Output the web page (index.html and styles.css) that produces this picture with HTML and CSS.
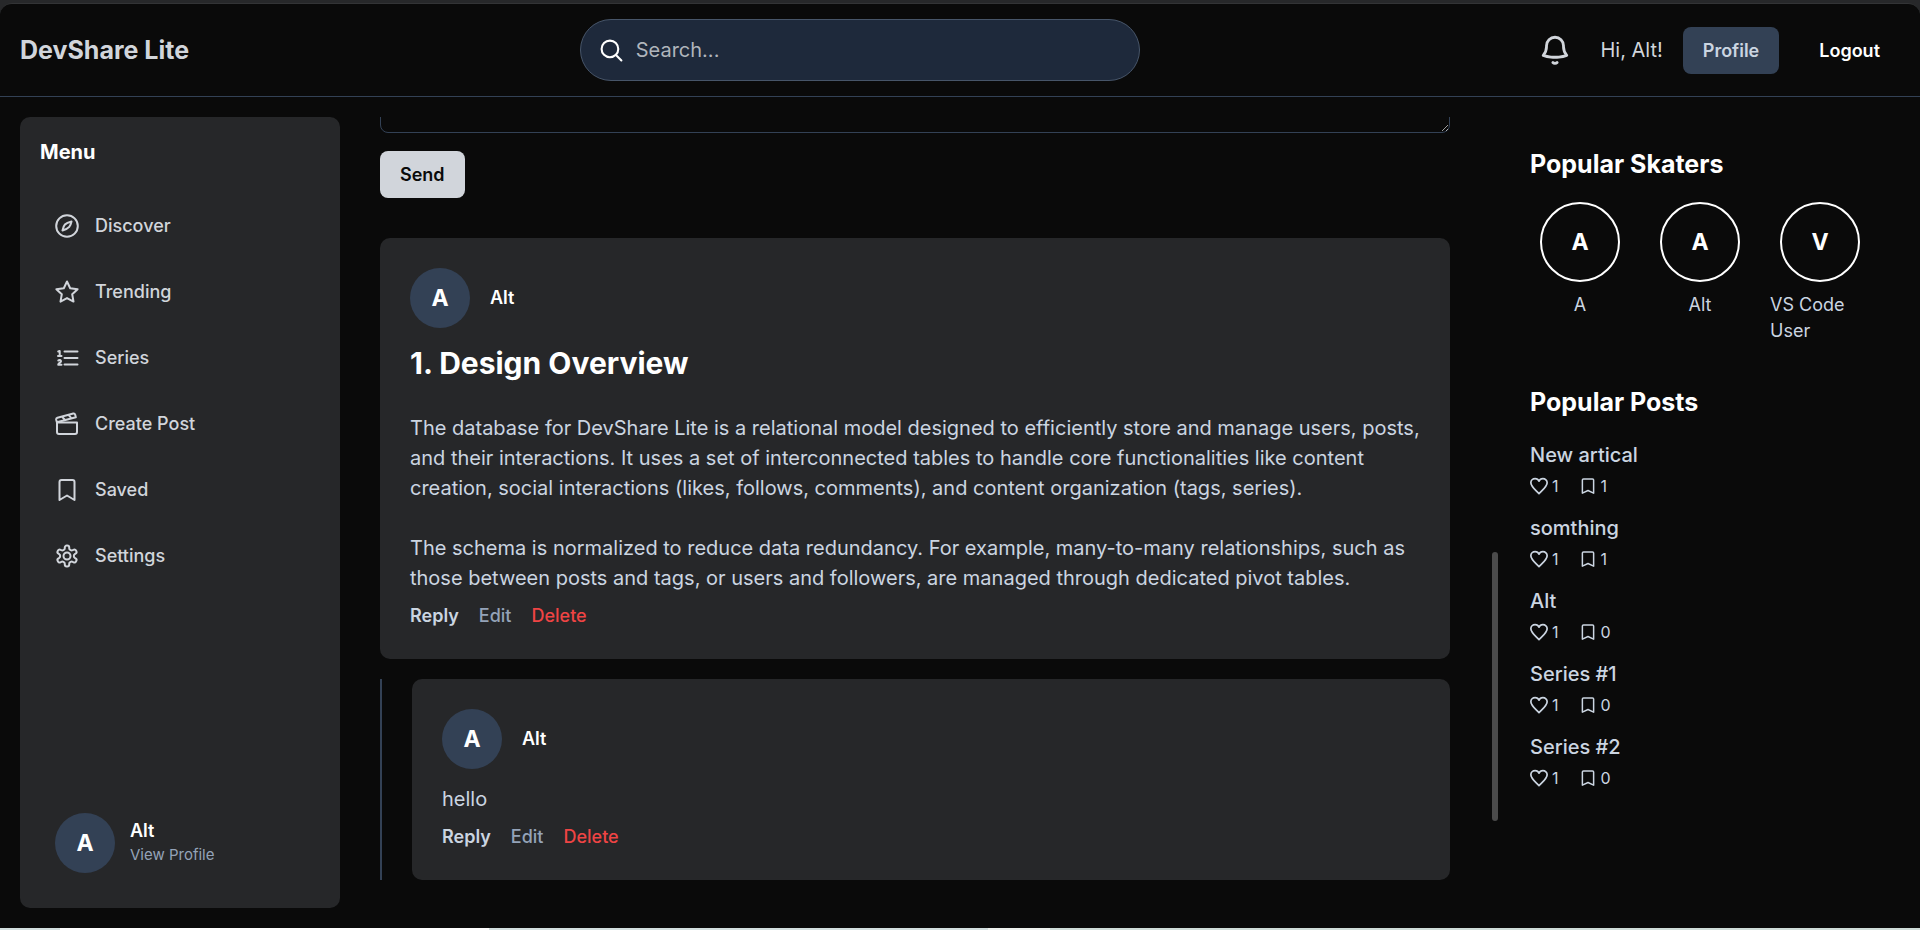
FILE: index.html
```html
<!DOCTYPE html>
<html lang="en">
<head>
<meta charset="utf-8">
<title>DevShare Lite</title>
<link rel="stylesheet" href="styles.css">
</head>
<body>
<svg class="sprite" aria-hidden="true">
  <symbol id="heart" viewBox="1.500 1.500 21 21"><path d="M21.500 8.250c0-2.600-2.200-4.750-5-4.750-2 0-3.800 1.200-4.500 2.900-.7-1.700-2.500-2.900-4.500-2.900-2.800 0-5 2.150-5 4.750 0 4.250 4 7.250 9.500 12.750 5.500-5.500 9.500-8.500 9.500-12.750Z"/></symbol>
  <symbol id="mark" viewBox="0 0 24 24"><path d="M4.500 21.500V4a1.500 1.500 0 0 1 1.500-1.500h12A1.500 1.500 0 0 1 19.500 4v17.500L12 18Z"/></symbol>
</svg>
<div class="app">
  <header class="header">
    <a class="brand" href="#">DevShare Lite</a>
    <label class="search">
      <svg class="icon-search" viewBox="0 0 24 24"><circle cx="10.500" cy="10.500" r="8"/><path d="m16.500 16.500 5 5"/></svg>
      <input class="search-input" type="search" placeholder="Search..." aria-label="Search">
    </label>
    <div class="account">
      <button class="bell" aria-label="Notifications"><svg class="icon-bell" viewBox="0 0 24 24"><path d="M14.857 17.082a23.848 23.848 0 0 0 5.454-1.310A8.967 8.967 0 0 1 18 9.750V9A6 6 0 0 0 6 9v.75a8.967 8.967 0 0 1-2.312 6.022c1.733.64 3.560 1.085 5.455 1.310m5.714 0a24.255 24.255 0 0 1-5.714 0m5.714 0H9.143"/><path d="M10.500 20.800c.8.9 2.200.9 3 0"/></svg></button>
      <span class="greeting">Hi, Alt!</span>
      <button class="btn btn-profile">Profile</button>
      <button class="btn btn-logout">Logout</button>
    </div>
  </header>
  <div class="body">
    <aside class="sidebar">
      <h2 class="menu-title">Menu</h2>
      <nav class="nav">
        <a class="nav-item" href="#"><svg class="icon" viewBox="0 0 24 24"><circle cx="12" cy="12" r="10.800"/><path d="M16.500 7.500C15.500 12 14.500 14.500 7.500 16.500 8.500 11 10 9 16.500 7.500Z"/></svg>Discover</a>
        <a class="nav-item" href="#"><svg class="icon" viewBox="0 0 24 24"><path d="m12 1.500 3.200 6.700 7.400 1-5.400 5.100 1.300 7.300L12 18.100l-6.500 3.500 1.300-7.300L1.400 9.200l7.400-1Z"/></svg>Trending</a>
        <a class="nav-item" href="#"><svg class="icon" viewBox="0 0 24 24"><path d="M9.500 5.500h13M9.500 12h13M9.500 18.500h13"/><path d="M3.200 5.500 4.700 5v5M3 10h3.500M3.300 14.500c1-1 2.900-.5 2.700.9-.1 1-2.800 1.600-2.800 3.300h3.300"/></svg>Series</a>
        <a class="nav-item" href="#"><svg class="icon" viewBox="0 0 24 24"><path d="M20.800 5.300 1.900 10.200l-.7-2.500c-.2-1 .3-1.700 1.200-2l15.900-4.200c1-.2 1.600.3 1.900 1.200ZM7 4.600l3 3.400M13.500 2.900l3 3.400"/><path d="M2 10.500h20V20a2 2 0 0 1-2 2H4a2 2 0 0 1-2-2Z"/></svg>Create Post</a>
        <a class="nav-item" href="#"><svg class="icon" viewBox="0 0 24 24"><path d="M4.500 22V4a2 2 0 0 1 2-2h11a2 2 0 0 1 2 2v18L12 17.500Z"/></svg>Saved</a>
        <a class="nav-item" href="#"><svg class="icon" viewBox="0 0 24 24"><path d="M12.220 1.500h-.44a2 2 0 0 0-2 2v.68a2 2 0 0 1-1 1.730l-.43.25a2 2 0 0 1-2 0l-.65-.33a2 2 0 0 0-2.730.73l-.22.380a2 2 0 0 0 .73 2.730l.65.350a2 2 0 0 1 1 1.720v.51a2 2 0 0 1-1 1.740l-.65.340a2 2 0 0 0-.73 2.730l.22.380a2 2 0 0 0 2.730.73l.65-.33a2 2 0 0 1 2 0l.43.250a2 2 0 0 1 1 1.730v.68a2 2 0 0 0 2 2h.44a2 2 0 0 0 2-2v-.68a2 2 0 0 1 1-1.730l.43-.25a2 2 0 0 1 2 0l.65.330a2 2 0 0 0 2.730-.73l.22-.39a2 2 0 0 0-.73-2.730l-.65-.33a2 2 0 0 1-1-1.740v-.5a2 2 0 0 1 1-1.740l.65-.34a2 2 0 0 0 .73-2.730l-.22-.38a2 2 0 0 0-2.730-.73l-.65.330a2 2 0 0 1-2 0l-.43-.25a2 2 0 0 1-1-1.730V3.500a2 2 0 0 0-2-2Z"/><circle cx="12" cy="12" r="3.500"/></svg>Settings</a>
      </nav>
      <a class="me" href="#">
        <span class="avatar">A</span>
        <span class="me-text"><span class="name">Alt</span><span class="me-link">View Profile</span></span>
      </a>
    </aside>
    <main class="main">
      <form class="composer">
        <textarea class="composer-input" aria-label="Write a comment"></textarea>
        <button class="btn btn-send" type="button">Send</button>
      </form>
      <article class="card">
        <div class="author"><span class="avatar">A</span><span class="name">Alt</span></div>
        <h1 class="card-title">1. Design Overview</h1>
        <p class="text">The database for DevShare Lite is a relational model designed to efficiently store and manage users, posts, and their interactions. It uses a set of interconnected tables to handle core functionalities like content creation, social interactions (likes, follows, comments), and content organization (tags, series).</p>
        <p class="text">The schema is normalized to reduce data redundancy. For example, many-to-many relationships, such as those between posts and tags, or users and followers, are managed through dedicated pivot tables.</p>
        <div class="actions"><button class="action reply">Reply</button><button class="action edit">Edit</button><button class="action delete">Delete</button></div>
      </article>
      <div class="thread">
        <article class="card">
          <div class="author"><span class="avatar">A</span><span class="name">Alt</span></div>
          <p class="text">hello</p>
          <div class="actions"><button class="action reply">Reply</button><button class="action edit">Edit</button><button class="action delete">Delete</button></div>
        </article>
      </div>
      <div class="scroll-thumb"></div>
    </main>
    <aside class="aside">
      <section>
        <h2 class="aside-title">Popular Skaters</h2>
        <div class="people">
          <a class="person" href="#"><span class="ring">A</span><span>A</span></a>
          <a class="person" href="#"><span class="ring">A</span><span>Alt</span></a>
          <a class="person" href="#"><span class="ring">V</span><span>VS Code User</span></a>
        </div>
      </section>
      <section>
        <h2 class="aside-title">Popular Posts</h2>
        <div class="posts">
          <div class="post"><a class="post-title" href="#">New artical</a><div class="stats"><span class="stat"><svg class="icon-stat"><use href="#heart"/></svg>1</span><span class="stat"><svg class="icon-stat"><use href="#mark"/></svg>1</span></div></div>
          <div class="post"><a class="post-title" href="#">somthing</a><div class="stats"><span class="stat"><svg class="icon-stat"><use href="#heart"/></svg>1</span><span class="stat"><svg class="icon-stat"><use href="#mark"/></svg>1</span></div></div>
          <div class="post"><a class="post-title" href="#">Alt</a><div class="stats"><span class="stat"><svg class="icon-stat"><use href="#heart"/></svg>1</span><span class="stat"><svg class="icon-stat"><use href="#mark"/></svg>0</span></div></div>
          <div class="post"><a class="post-title" href="#">Series #1</a><div class="stats"><span class="stat"><svg class="icon-stat"><use href="#heart"/></svg>1</span><span class="stat"><svg class="icon-stat"><use href="#mark"/></svg>0</span></div></div>
          <div class="post"><a class="post-title" href="#">Series #2</a><div class="stats"><span class="stat"><svg class="icon-stat"><use href="#heart"/></svg>1</span><span class="stat"><svg class="icon-stat"><use href="#mark"/></svg>0</span></div></div>
        </div>
      </section>
    </aside>
  </div>
</div>
</body>
</html>
```
FILE: styles.css
```css
* { box-sizing: border-box; }
body {
  margin: 0;
  height: 100vh;
  padding: 3px 0 2px;
  background:
    linear-gradient(90deg, #d3dfdf 60px, #ffffff 60px 489px, #d3dfdf 489px 988px, #eef2ef 988px 1050px, #d0ddd9 1050px) bottom / 100% 2px no-repeat,
    #27282a;
  color: #fff;
  font: 20px/30px Inter, "Noto Sans", sans-serif;
  overflow: hidden;
}
h1, h2, p { margin: 0; }
a { color: inherit; text-decoration: none; }
button, input, textarea { font: inherit; color: inherit; }
button { border: 0; background: none; padding: 0; cursor: pointer; }
svg { fill: none; stroke: currentColor; stroke-linecap: round; stroke-linejoin: round; flex: none; }
.sprite { position: absolute; width: 0; height: 0; }

.app {
  height: 100%;
  display: flex;
  flex-direction: column;
  background: #0a0a0a;
  border-top: 1px solid #333436;
  border-radius: 12px 12px 0 0;
}
.header {
  display: flex;
  align-items: center;
  justify-content: space-between;
  padding: 15px 20px;
  border-bottom: 1px solid #334155;
}
.brand { color: #d1d5db; font-size: 25px; font-weight: 700; }
.search {
  flex: 0 1 560px;
  display: flex;
  align-items: center;
  gap: 12px;
  padding: 15px 18px;
  background: #1e293b;
  border: 1px solid #475569;
  border-radius: 31px;
}
.search-input { flex: 1; min-width: 0; height: 30px; padding: 0; border: 0; outline: 0; background: none; }
.search-input::placeholder { color: #b0b5bc; opacity: 1; }
.icon-search { width: 25px; height: 25px; stroke-width: 2; }
.account { display: flex; align-items: center; gap: 20px; }
.bell { display: flex; padding: 8px; color: #d1d5db; }
.icon-bell { width: 34px; height: 34px; stroke-width: 2; }
.greeting { color: #d1d5db; }
.btn { padding: 10px 20px; border-radius: 8px; font-size: 18px; font-weight: 600; line-height: 27px; }
.btn-profile { background: #334155; color: #cbd5e1; }
.btn-send { background: #d1d5db; color: #0a0a0a; }

.body { flex: 1; min-height: 0; display: flex; padding: 20px; }
.sidebar {
  flex: 0 0 320px;
  display: flex;
  flex-direction: column;
  padding: 20px 20px 35px;
  background: #262729;
  border-radius: 10px;
}
.menu-title { font-size: 20px; font-weight: 700; }
.nav { display: flex; flex-direction: column; gap: 20px; padding: 36px 15px; }
.nav-item { display: flex; align-items: center; gap: 16px; height: 46px; color: #d1d5db; font-size: 18px; font-weight: 500; }
.icon { width: 24px; height: 24px; stroke-width: 2; }
.me { margin-top: auto; display: flex; align-items: center; gap: 15px; padding: 0 15px; }
.me-text { display: flex; flex-direction: column; line-height: 24px; }
.me-link { color: #94a3b8; font-size: 15px; }
.avatar {
  width: 60px;
  height: 60px;
  display: grid;
  place-items: center;
  border-radius: 50%;
  background: #334155;
  font-size: 23px;
  font-weight: 700;
}
.name { font-size: 18px; font-weight: 600; }

.main {
  position: relative;
  flex: 1;
  min-width: 0;
  display: flex;
  flex-direction: column;
  justify-content: flex-end;
  margin: 0 30px 0 20px;
  padding: 0 50px 28px 20px;
  overflow: hidden;
}
.composer { flex: none; display: flex; flex-direction: column; align-items: flex-start; gap: 18px; margin-bottom: 40px; }
.composer-input {
  width: 100%;
  height: 120px;
  border: 1px solid #334155;
  border-radius: 8px;
  background: transparent;
  color-scheme: dark;
  resize: vertical;
}
.card { flex: none; padding: 30px; background: #262729; border-radius: 10px; }
.author { display: flex; align-items: center; gap: 20px; margin-bottom: 15px; }
.card-title { margin-bottom: 30px; font-size: 30px; font-weight: 700; line-height: 40px; }
.text { color: #cbd5e1; }
.text + .text { margin-top: 30px; }
.actions { display: flex; gap: 20px; margin-top: 10px; }
.action { font-size: 18px; font-weight: 500; line-height: 26px; }
.reply { color: #cbd5e1; font-weight: 600; }
.edit { color: #94a3b8; }
.delete { color: #ef4444; }
.thread { flex: none; margin-top: 20px; padding-left: 30px; border-left: 2px solid #334155; }
.scroll-thumb { position: absolute; right: 2px; top: 55%; width: 6px; height: 34%; border-radius: 3px; background: #4b4b4b; }

.aside { flex: 0 0 370px; display: flex; flex-direction: column; gap: 40px; padding-top: 29px; }
.aside-title { margin-bottom: 20px; font-size: 25px; font-weight: 700; line-height: 36px; }
.people { display: flex; gap: 20px; }
.person { width: 100px; display: flex; flex-direction: column; align-items: center; gap: 10px; color: #cbd5e1; font-size: 18px; line-height: 26px; }
.ring {
  width: 80px;
  height: 80px;
  display: grid;
  place-items: center;
  border: 2px solid #fff;
  border-radius: 50%;
  color: #fff;
  font-size: 23px;
  font-weight: 700;
}
.posts { display: flex; flex-direction: column; gap: 16px; }
.post { display: flex; flex-direction: column; gap: 5px; }
.post-title { color: #cbd5e1; font-weight: 500; }
.stats { display: flex; gap: 20px; color: #cbd5e1; font-size: 16px; line-height: 22px; }
.stat { display: flex; align-items: center; gap: 4px; }
.icon-stat { width: 18px; height: 18px; stroke-width: 2; }
```
